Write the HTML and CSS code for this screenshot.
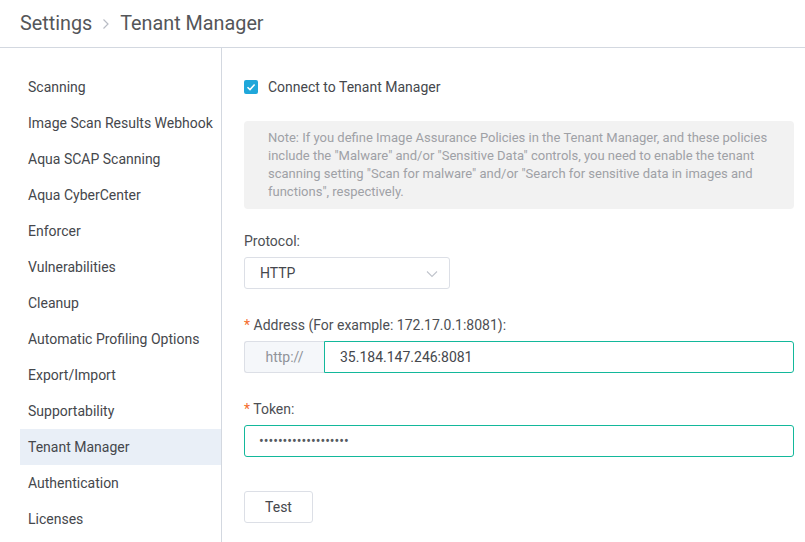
FILE: index.html
```html
<!DOCTYPE html>
<html>
<head>
<meta charset="utf-8">
<link rel="stylesheet" href="styles.css">
</head>
<body>
<header class="header">
  <span class="crumb">Settings</span>
  <svg class="sep" width="8" height="12" viewBox="0 0 8 12"><path d="M1.5 1.5 L6 6 L1.5 10.5" fill="none" stroke="#b8bcc4" stroke-width="1.2"/></svg>
  <span class="crumb">Tenant Manager</span>
</header>
<div class="main">
  <nav class="sidebar">
    <div class="item">Scanning</div>
    <div class="item">Image Scan Results Webhook</div>
    <div class="item">Aqua SCAP Scanning</div>
    <div class="item">Aqua CyberCenter</div>
    <div class="item">Enforcer</div>
    <div class="item">Vulnerabilities</div>
    <div class="item">Cleanup</div>
    <div class="item">Automatic Profiling Options</div>
    <div class="item">Export/Import</div>
    <div class="item">Supportability</div>
    <div class="item active">Tenant Manager</div>
    <div class="item">Authentication</div>
    <div class="item">Licenses</div>
  </nav>
  <section class="content">
    <label class="check-row">
      <span class="checkbox"><svg width="14" height="14" viewBox="0 0 14 14"><path d="M3.5 7.2 L6 9.6 L10.6 4.6" fill="none" stroke="#fff" stroke-width="1.5"/></svg></span>
      <span>Connect to Tenant Manager</span>
    </label>
    <div class="note">Note: If you define Image Assurance Policies in the Tenant Manager, and these policies include the "Malware" and/or "Sensitive Data" controls, you need to enable the tenant scanning setting "Scan for malware" and/or "Search for sensitive data in images and functions", respectively.</div>
    <div class="field field-protocol">
      <div class="label">Protocol:</div>
      <div class="select">
        <span>HTTP</span>
        <svg class="chev" width="12" height="8" viewBox="0 0 12 8"><path d="M1 1.5 L6 6.5 L11 1.5" fill="none" stroke="#c0c4cc" stroke-width="1.1"/></svg>
      </div>
    </div>
    <div class="field field-address">
      <div class="label"><span class="req">*</span> Address (For example: 172.17.0.1:8081):</div>
      <div class="group">
        <div class="prefix">http://</div>
        <div class="input focus">35.184.147.246:8081</div>
      </div>
    </div>
    <div class="field field-token">
      <div class="label"><span class="req">*</span> Token:</div>
      <div class="input focus full"><span class="dots">•••••••••••••••••••</span></div>
    </div>
    <button class="btn">Test</button>
  </section>
</div>
</body>
</html>
```
FILE: styles.css
```css
* { box-sizing: border-box; }
html, body { margin: 0; padding: 0; background: #fff; }
body {
  font-family: Roboto, "Liberation Sans", sans-serif;
  color: #4d4f54;
  width: 805px;
  height: 542px;
  overflow: hidden;
}
.header {
  height: 48px;
  border-bottom: 1px solid #d3d8e0;
  display: flex;
  align-items: center;
  padding: 0 0 1px 20px;
  gap: 10px;
}
.crumb { font-size: 19.8px; color: #545659; }
.sep { margin: 2px 0 0 0; }
.main { display: flex; height: 494px; }
.sidebar {
  width: 222px;
  border-right: 1px solid #d3d8e0;
  padding: 21px 0 0 20px;
  flex-shrink: 0;
}
.item {
  height: 36px;
  line-height: 36px;
  padding-left: 8px;
  font-size: 14px;
  color: #45474c;
}
.item.active { background: #e9eff7; }
.content { flex: 1; padding: 21px 11px 0 22px; }
.check-row {
  display: flex;
  align-items: center;
  height: 36px;
  font-size: 14px;
  color: #45474c;
  gap: 10px;
}
.checkbox {
  width: 14px;
  height: 14px;
  background: #1fa7da;
  border-radius: 2px;
  display: flex;
}
.note {
  margin-top: 16px;
  background: #f2f2f2;
  border-radius: 4px;
  padding: 8px 20px 8px 24px;
  font-size: 13px;
  line-height: 18px;
  color: #9fa1a6;
  height: 88px;
}
.field { margin-top: 22px; }
.label { font-size: 14px; color: #4d4f54; line-height: 20px; }
.req { color: #f56c2c; }
.select {
  margin-top: 6px;
  width: 206px;
  height: 32px;
  border: 1px solid #dcdfe6;
  border-radius: 3px;
  display: flex;
  align-items: center;
  justify-content: space-between;
  padding: 0 11px 0 15px;
  font-size: 14px;
  color: #45474c;
}
.chev { margin-top: 2px; }
.field-address { margin-top: 26px; }
.group { margin-top: 6px; display: flex; height: 32px; }
.prefix {
  width: 80px;
  background: #f5f7fa;
  border: 1px solid #dcdfe6;
  border-right: none;
  border-radius: 3px 0 0 3px;
  font-size: 14px;
  color: #909399;
  display: flex;
  align-items: center;
  justify-content: center;
}
.input {
  height: 32px;
  flex: 1;
  border: 1px solid #dcdfe6;
  display: flex;
  align-items: center;
  padding: 0 15px;
  font-size: 14px;
  color: #45474c;
}
.input.focus { border-color: #13b89b; border-radius: 0 3px 3px 0; }
.input.full { border-radius: 3px; margin-top: 6px; }
.dots { font-size: 14px; letter-spacing: 0; color: #555a60; margin-left: -1px; }
.field-token { margin-top: 26px; }
.btn {
  margin-top: 34px;
  width: 69px;
  height: 32px;
  background: #fff;
  border: 1px solid #dcdfe6;
  border-radius: 3px;
  font-family: Roboto, "Liberation Sans", sans-serif;
  font-size: 14px;
  color: #45474c;
  cursor: pointer;
}
```
